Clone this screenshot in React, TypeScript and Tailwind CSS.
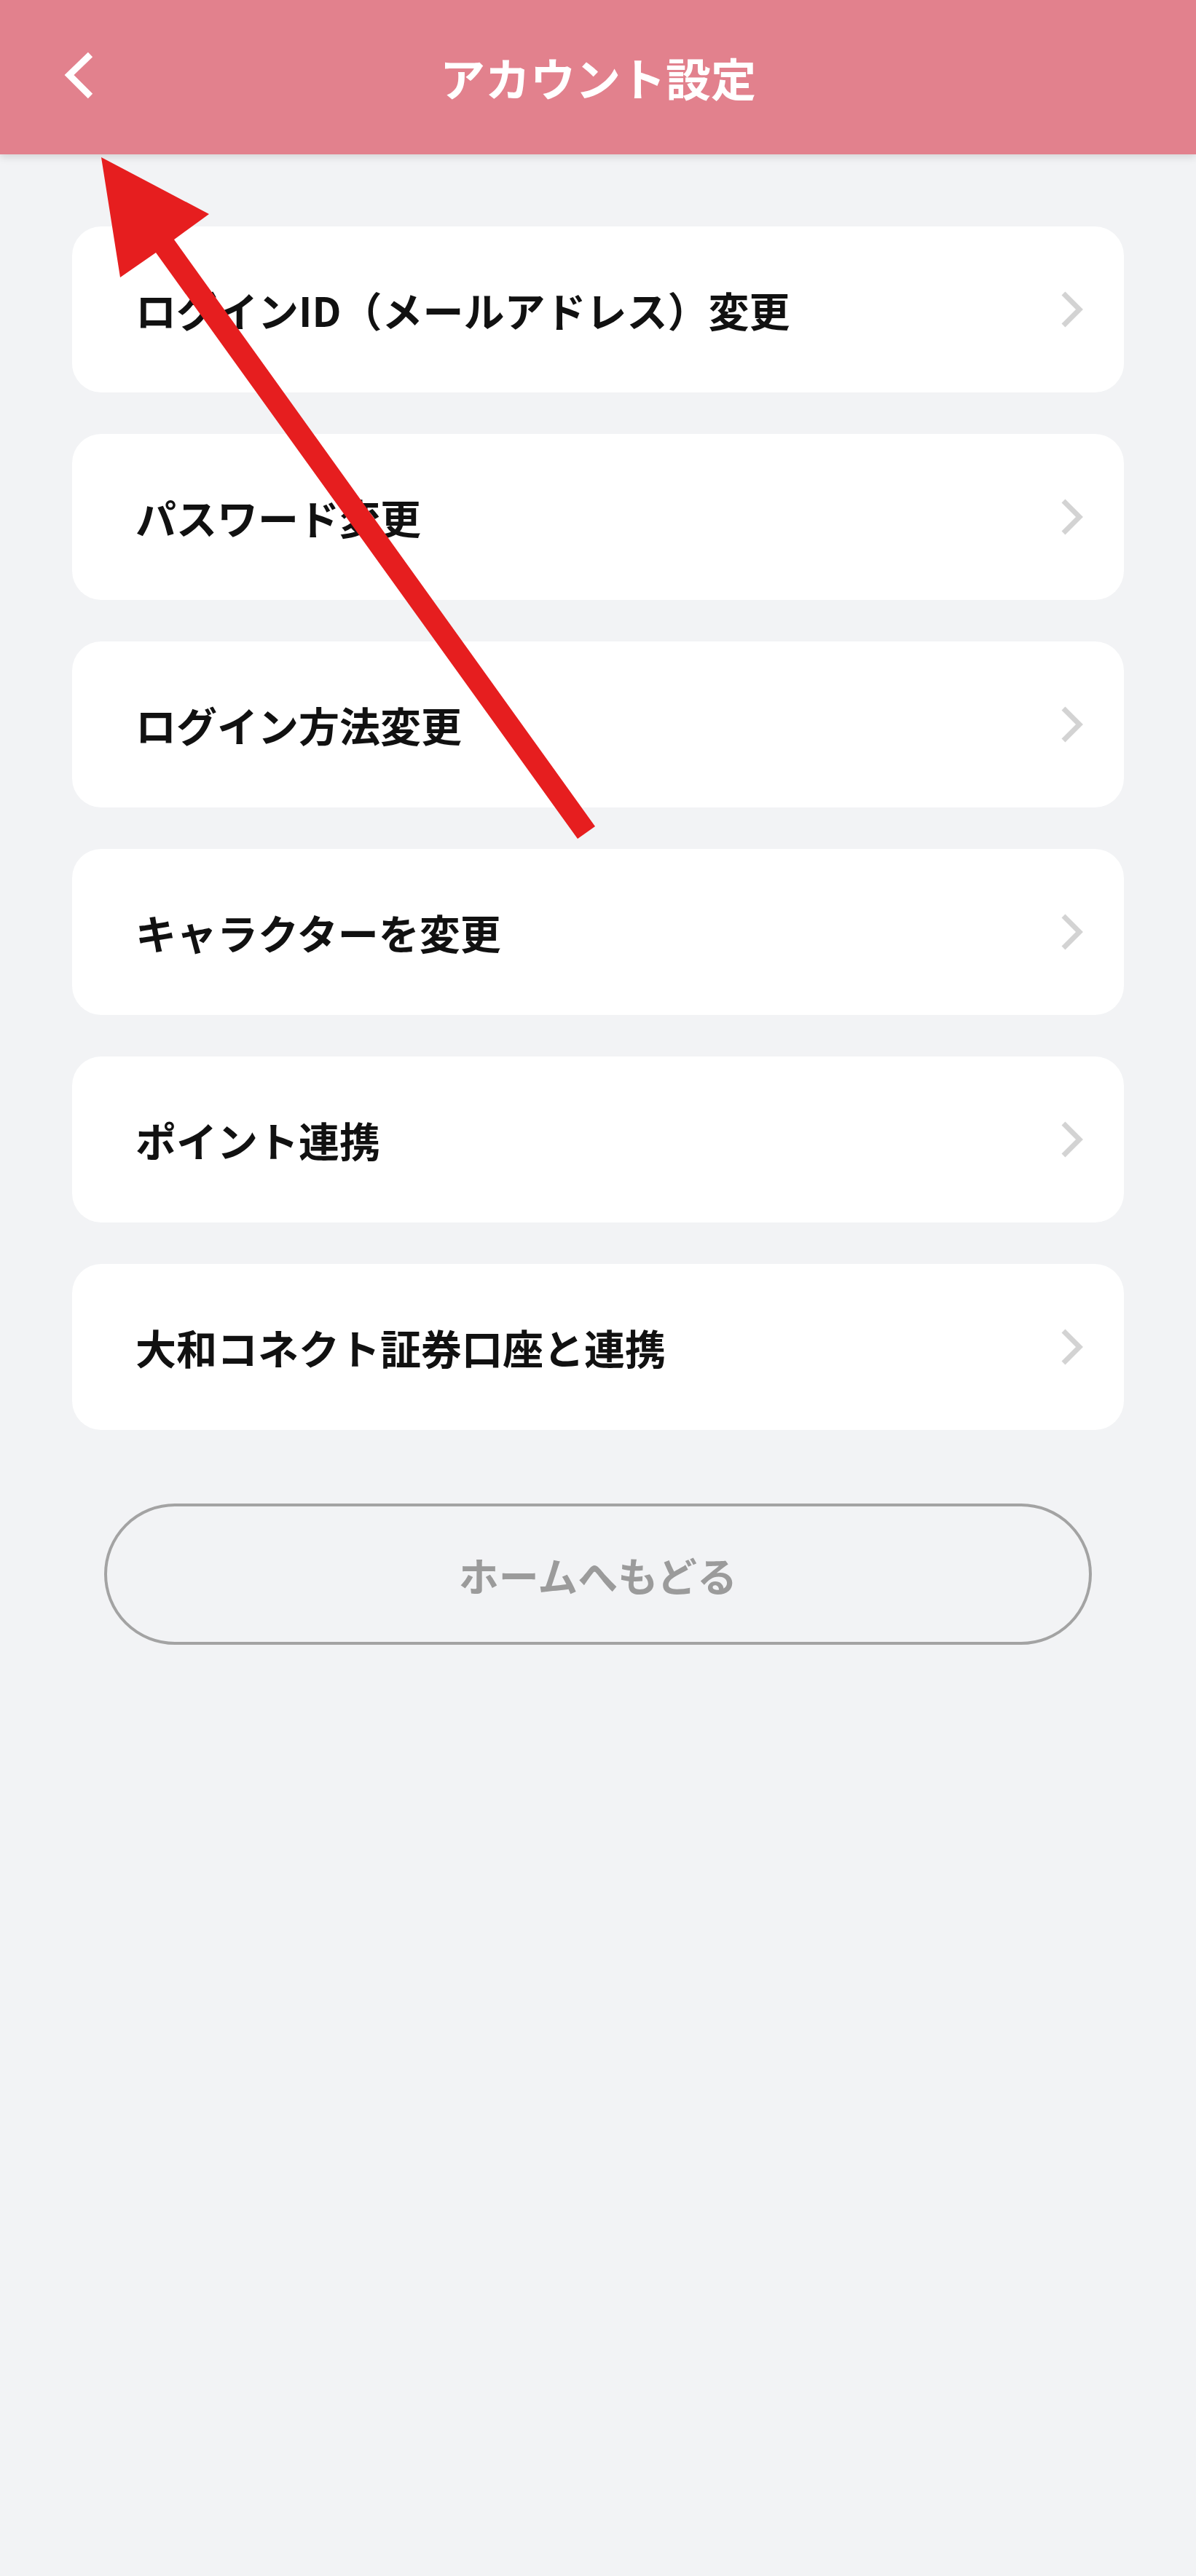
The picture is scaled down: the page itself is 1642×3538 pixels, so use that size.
import React from "react";

const items = [
  "ログインID（メールアドレス）変更",
  "パスワード変更",
  "ログイン方法変更",
  "キャラクターを変更",
  "ポイント連携",
  "大和コネクト証券口座と連携",
];

function Chevron() {
  return (
    <svg width="36" height="56" viewBox="0 0 36 56" fill="none" className="shrink-0">
      <path d="M8 6 L30 28 L8 50" stroke="#d3d3d3" strokeWidth="7" strokeLinejoin="miter" />
    </svg>
  );
}

export default function App() {
  return (
    <div
      className="relative min-h-screen w-full bg-[#f2f3f5]"
      style={{ fontFamily: '"Noto Sans CJK JP", "Noto Sans", sans-serif' }}
    >
      <header className="relative z-10 flex h-[212px] items-center justify-center bg-[#e2818d] shadow-[0_4px_10px_rgba(0,0,0,0.12)]">
        <button className="absolute left-[80px] top-[60px] h-[86px] w-[56px]" aria-label="back">
          <svg width="56" height="86" viewBox="0 0 56 86" fill="none">
            <path d="M44 15 L15 43 L44 72" stroke="#ffffff" strokeWidth="9" />
          </svg>
        </button>
        <h1 className="text-[62px] font-bold leading-none text-white">アカウント設定</h1>
      </header>

      <main className="flex flex-col px-[99px] pt-[99px]">
        <div className="flex flex-col gap-[57px]">
          {items.map((t) => (
            <div
              key={t}
              className="flex h-[228px] items-center justify-between rounded-[40px] bg-white pl-[87px] pr-[55px]"
            >
              <span className="text-[56px] font-bold leading-none text-[#111111]">{t}</span>
              <Chevron />
            </div>
          ))}
        </div>

        <button className="mx-[44px] mt-[101px] flex h-[194px] items-center justify-center rounded-full border-[4px] border-[#a3a3a3] bg-transparent">
          <span className="text-[55px] font-bold leading-none text-[#9b9b9b]">ホームへもどる</span>
        </button>
      </main>

      <svg
        className="pointer-events-none absolute left-0 top-0 z-20"
        width="1642"
        height="1200"
        viewBox="0 0 1642 1200"
      >
        <polygon
          points="139,216 287,294 239,329 817,1135 793,1152 214,347 165,381"
          fill="#e61e1f"
        />
      </svg>
    </div>
  );
}
